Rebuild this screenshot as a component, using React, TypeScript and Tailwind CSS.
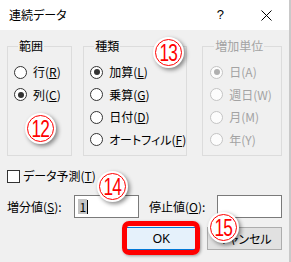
import React from "react";

function Radio({
  checked,
  disabled,
  children,
}: {
  checked?: boolean;
  disabled?: boolean;
  children: React.ReactNode;
}) {
  return (
    <div className="flex items-center gap-[6px] h-[22.5px]">
      <span
        className={
          disabled
            ? "w-[13px] h-[13px] rounded-full border border-[#c4c4c4] bg-[#fcfcfc] flex items-center justify-center shrink-0"
            : "w-[13px] h-[13px] rounded-full border border-[#333333] bg-white flex items-center justify-center shrink-0"
        }
      >
        {checked && (
          <span
            className={
              disabled
                ? "w-[6px] h-[6px] rounded-full bg-[#b0b0b0]"
                : "w-[6px] h-[6px] rounded-full bg-[#333333]"
            }
          />
        )}
      </span>
      <span className={disabled ? "text-[#a3a3a3] whitespace-nowrap" : "whitespace-nowrap"}>{children}</span>
    </div>
  );
}

function Badge({ n, className }: { n: string; className: string }) {
  return (
    <div
      className={
        "absolute w-[31px] h-[31px] rounded-full bg-white shadow-[2px_2px_4px_rgba(0,0,0,0.45)] flex items-center justify-center " +
        className
      }
    >
      <div className="w-[27px] h-[27px] rounded-full border-[1.5px] border-[#ff0000] flex items-center justify-center">
        <span className="inline-block text-[#ff0000] font-['Liberation_Sans',sans-serif] text-[24px] leading-none tracking-[-1px] scale-x-[0.72] mt-[1px]">
          {n}
        </span>
      </div>
    </div>
  );
}

export default function App() {
  return (
    <div className="w-[291px] h-[262px] relative overflow-hidden bg-[#f0f0f0] border-r-2 border-[#c9c9c9] font-['Noto_Sans_CJK_JP',sans-serif] [font-feature-settings:'palt'] text-[12px] leading-[16px] text-black">
      {/* title bar */}
      <div className="h-[30px] bg-white flex items-center pl-[9px]">
        <span className="text-[12px]">連続データ</span>
        <span className="ml-auto font-['Liberation_Sans',sans-serif] text-[13px]">?</span>
        <svg className="ml-[37px] mr-[17px]" width="11" height="11" viewBox="0 0 11 11">
          <path d="M0.5 0.5 L10.5 10.5 M10.5 0.5 L0.5 10.5" stroke="#000" strokeWidth="1" fill="none" />
        </svg>
      </div>

      {/* body */}
      <div className="px-[7px] pt-[8px]">
        <div className="flex">
          <fieldset className="w-[67px] h-[118px] border border-[#dcdcdc] pt-[7px] pl-[6px]">
            <legend className="ml-[4px] px-[1px] leading-[16px]">範囲</legend>
            <Radio>
              行(<u>R</u>)
            </Radio>
            <Radio checked>
              列(<u>C</u>)
            </Radio>
          </fieldset>
          <fieldset className="ml-[11px] w-[101px] h-[118px] border border-[#dcdcdc] pt-[7px] pl-[6px]">
            <legend className="ml-[4px] px-[1px] leading-[16px]">種類</legend>
            <Radio checked>
              加算(<u>L</u>)
            </Radio>
            <Radio>
              乗算(<u>G</u>)
            </Radio>
            <Radio>
              日付(<u>D</u>)
            </Radio>
            <Radio>
              オートフィル(<u>F</u>)
            </Radio>
          </fieldset>
          <fieldset className="ml-[15px] w-[82px] h-[118px] border border-[#dcdcdc] pt-[7px] pl-[7px]">
            <legend className="ml-[4px] px-[1px] leading-[16px] text-[#a3a3a3]">増加単位</legend>
            <Radio checked disabled>
              日(A)
            </Radio>
            <Radio disabled>週日(W)</Radio>
            <Radio disabled>月(M)</Radio>
            <Radio disabled>年(Y)</Radio>
          </fieldset>
        </div>

        <div className="mt-[12px] h-[16px] flex items-center gap-[3px]">
          <span className="w-[13px] h-[13px] border border-[#333333] bg-white shrink-0" />
          <span>
            データ予測(<u>T</u>)
          </span>
        </div>

        <div className="mt-[11px] flex items-center">
          <span className="w-[68px] whitespace-nowrap">
            増分値(<u>S</u>):
          </span>
          <div className="w-[65px] h-[23px] border border-[#7a7a7a] bg-white flex items-center pl-[3px]">
            <span className="bg-[#c4c4c4] px-[1px] leading-[15px]">1</span>
            <span className="w-[1px] h-[14px] bg-black" />
          </div>
          <span className="ml-[10px] w-[69px] whitespace-nowrap">
            停止値(<u>O</u>):
          </span>
          <div className="w-[65px] h-[23px] border border-[#7a7a7a] bg-white" />
        </div>

        <div className="mt-[9px] flex justify-end gap-[8px]">
          <div className="w-[75px] h-[23px] border border-[#0078d7] bg-[#e5f1fb] flex items-center justify-center font-['Liberation_Sans',sans-serif] text-[12px]">
            OK
          </div>
          <div className="w-[75px] h-[23px] border border-[#adadad] bg-[#e1e1e1] flex items-center justify-center">
            キャンセル
          </div>
        </div>
      </div>

      {/* annotations */}
      <div className="absolute left-[122px] top-[221px] w-[78px] h-[34px] border-[5px] border-[#ff0000] rounded-[7px] shadow-[1px_1px_3px_rgba(0,0,0,0.35)]" />
      <Badge n="12" className="left-[25px] top-[113px]" />
      <Badge n="13" className="left-[153px] top-[37px]" />
      <Badge n="14" className="left-[97px] top-[171px]" />
      <Badge n="15" className="left-[208px] top-[212px]" />
    </div>
  );
}
